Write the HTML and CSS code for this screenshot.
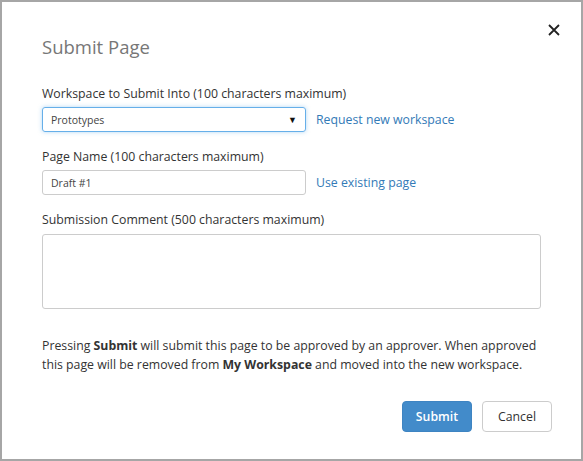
FILE: index.html
```html
<!DOCTYPE html>
<html lang="en">
<head>
  <meta charset="UTF-8">
  <title>Submit Page</title>
  <link rel="stylesheet" href="styles.css">
</head>
<body>
  <div class="dialog">
    <button class="close" aria-label="Close">
      <svg width="12" height="12" viewBox="0 0 12 12"><path d="M1 1L11 11M11 1L1 11" stroke="#222" stroke-width="1.8"/></svg>
    </button>
    <h1>Submit Page</h1>

    <div class="field">
      <label>Workspace to Submit Into (100 characters maximum)</label>
      <div class="row">
        <div class="select focused">
          <span>Prototypes</span>
          <span class="caret">&#9660;</span>
        </div>
        <a href="#">Request new workspace</a>
      </div>
    </div>

    <div class="field">
      <label>Page Name (100 characters maximum)</label>
      <div class="row">
        <input class="text" type="text" value="Draft #1">
        <a href="#">Use existing page</a>
      </div>
    </div>

    <div class="field">
      <label>Submission Comment (500 characters maximum)</label>
      <textarea class="comment"></textarea>
    </div>

    <p class="note">Pressing <b>Submit</b> will submit this page to be approved by an approver. When approved this page will be removed from <b>My Workspace</b> and moved into the new workspace.</p>

    <div class="actions">
      <button class="btn primary">Submit</button>
      <button class="btn">Cancel</button>
    </div>
  </div>
</body>
</html>
```

FILE: styles.css
```css
body {
  margin: 0;
  font-family: 'Open Sans', 'Noto Sans', sans-serif;
  font-size: 12.3px;
  color: #333;
  background: #fff;
}
.dialog {
  position: relative;
  width: 583px;
  height: 461px;
  box-sizing: border-box;
  border: 2px solid #a6a6a6;
  padding: 0 40px;
}
.close {
  position: absolute;
  top: 22px;
  right: 21px;
  border: none;
  background: none;
  padding: 0;
  line-height: 0;
  cursor: pointer;
}
h1 {
  margin: 0;
  padding-top: 32px;
  font-size: 18.5px;
  font-weight: normal;
  color: #777;
  line-height: 26px;
}
.field label {
  display: block;
  margin-top: 16px;
  line-height: 18px;
}
h1 + .field label {
  margin-top: 25px;
}
.row {
  display: flex;
  align-items: center;
  gap: 10px;
  margin-top: 4px;
}
.row a {
  color: #337ab7;
  text-decoration: none;
}
.select,
.text {
  width: 264px;
  height: 25px;
  box-sizing: border-box;
  border: 1px solid #ccc;
  border-radius: 3px;
  font-family: inherit;
  font-size: 10.5px;
  color: #444;
  padding: 0 8px;
}
.select {
  display: flex;
  align-items: center;
  justify-content: space-between;
}
.select.focused {
  border-color: #66afe9;
  box-shadow: 0 0 4px rgba(102, 175, 233, 0.5);
}
.caret {
  font-size: 9px;
  color: #111;
}
.text {
  outline: none;
}
.comment {
  display: block;
  width: 100%;
  height: 75px;
  box-sizing: border-box;
  margin-top: 5px;
  border: 1px solid #ccc;
  border-radius: 3px;
  resize: none;
  font-family: inherit;
}
.note {
  margin: 27px 0 0;
  line-height: 19px;
}
.actions {
  display: flex;
  justify-content: flex-end;
  gap: 10px;
  margin: 27px -11px 0 0;
}
.btn {
  width: 70px;
  height: 31px;
  border: 1px solid #ccc;
  border-radius: 4px;
  background: #fff;
  font-family: inherit;
  font-size: 12.3px;
  color: #333;
  cursor: pointer;
}
.btn.primary {
  background: #428bca;
  border-color: #3e84c2;
  color: #fff;
  font-weight: 600;
}
```
